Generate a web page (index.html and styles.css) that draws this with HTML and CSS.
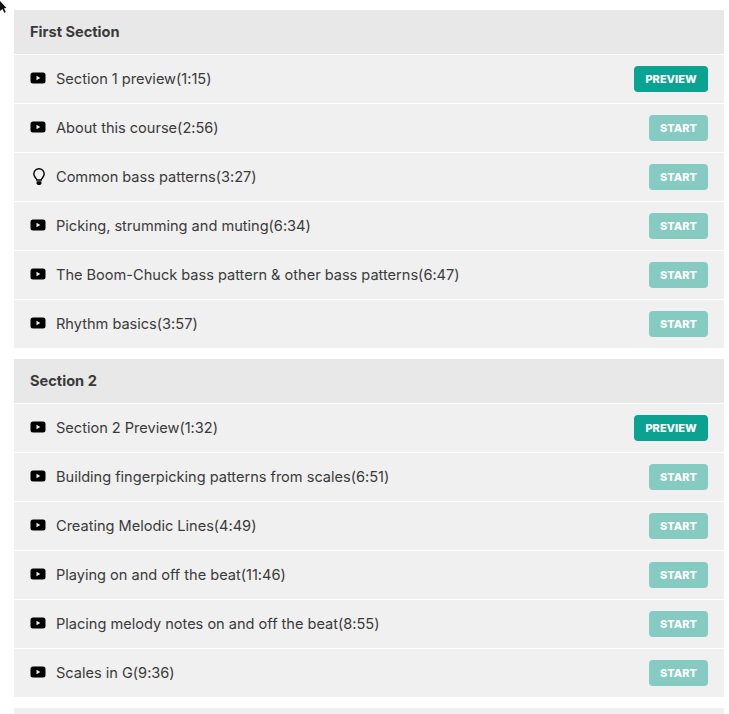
FILE: index.html
```html
<!DOCTYPE html>
<html>
	<head>
		<title>Course curriculum</title>
		<link rel="stylesheet" href="styles.css">
	</head>
	<body>
		<svg class="cursor" width="8" height="15" viewBox="0 0 8 15"><path d="M0 1l6.500 7-2.500.2 1.800 3.800-1.500.8-1.800-3.800L0 11z" fill="#111"/></svg>

		<svg class="defs" width="0" height="0">
			<symbol id="video" viewBox="0 0 16 12"><path fill-rule="evenodd" d="M3 .5h10A2.500 2.500 0 0 1 15.500 3v6A2.500 2.500 0 0 1 13 11.500H3A2.500 2.500 0 0 1 .5 9V3A2.500 2.500 0 0 1 3 .5zM6.500 3.800v4.400L10.300 6z"/></symbol>
			<symbol id="bulb" viewBox="0 0 16 18"><path fill="none" stroke="currentColor" stroke-width="1.400" d="M6.800 12C6.500 9.900 3.800 9 3.800 6A5.200 5.200 0 0 1 14.200 6C14.200 9 11.500 9.900 11.200 12z"/><path d="M6.600 13.300h4.800v2.200l-1.100 1.500H7.700l-1.100-1.500z"/></symbol>
		</svg>

		<section class="section">
			<h2 class="section-title">First Section</h2>
			<ul class="lessons">
				<li class="lesson"><svg class="icon"><use href="#video"/></svg><span class="name">Section 1 preview(1:15)</span><a class="btn preview">PREVIEW</a></li>
				<li class="lesson"><svg class="icon"><use href="#video"/></svg><span class="name">About this course(2:56)</span><a class="btn start">START</a></li>
				<li class="lesson"><svg class="icon icon-bulb"><use href="#bulb"/></svg><span class="name">Common bass patterns(3:27)</span><a class="btn start">START</a></li>
				<li class="lesson"><svg class="icon"><use href="#video"/></svg><span class="name">Picking, strumming and muting(6:34)</span><a class="btn start">START</a></li>
				<li class="lesson"><svg class="icon"><use href="#video"/></svg><span class="name">The Boom-Chuck bass pattern &amp; other bass patterns(6:47)</span><a class="btn start">START</a></li>
				<li class="lesson"><svg class="icon"><use href="#video"/></svg><span class="name">Rhythm basics(3:57)</span><a class="btn start">START</a></li>
			</ul>
		</section>

		<section class="section">
			<h2 class="section-title">Section 2</h2>
			<ul class="lessons">
				<li class="lesson"><svg class="icon"><use href="#video"/></svg><span class="name">Section 2 Preview(1:32)</span><a class="btn preview">PREVIEW</a></li>
				<li class="lesson"><svg class="icon"><use href="#video"/></svg><span class="name">Building fingerpicking patterns from scales(6:51)</span><a class="btn start">START</a></li>
				<li class="lesson"><svg class="icon"><use href="#video"/></svg><span class="name">Creating Melodic Lines(4:49)</span><a class="btn start">START</a></li>
				<li class="lesson"><svg class="icon"><use href="#video"/></svg><span class="name">Playing on and off the beat(11:46)</span><a class="btn start">START</a></li>
				<li class="lesson"><svg class="icon"><use href="#video"/></svg><span class="name">Placing melody notes on and off the beat(8:55)</span><a class="btn start">START</a></li>
				<li class="lesson"><svg class="icon"><use href="#video"/></svg><span class="name">Scales in G(9:36)</span><a class="btn start">START</a></li>
			</ul>
		</section>

		<section class="section next"></section>
	</body>
</html>
```

FILE: styles.css
```css
html, body {
	height: 714px;
	overflow: hidden;
}

body {
	margin: 0;
	padding: 10px 5px 0 14px;
	background: #fff;
	color: #3a3a3a;
	font-family: Inter, "Liberation Sans", sans-serif;
}

/* the pointer was caught in the screenshot */
.cursor {
	position: absolute;
	top: 0;
	left: 0;
}

.defs {
	position: absolute;
}

.section {
	margin-bottom: 11px;
	background: #f0f0f0;
}

.next {
	height: 6px;
	margin-bottom: 0;
}

.section-title {
	height: 44px;
	margin: 0;
	padding-left: 16px;
	border-bottom: 1px solid #fff;
	background: #e8e8e8;
	font-size: 14.6px;
	font-weight: 700;
	line-height: 45px;
}

.lessons {
	margin: 0;
	padding: 0;
	list-style: none;
}

.lesson {
	display: flex;
	align-items: center;
	height: 48px;
	padding: 0 16px;
	border-bottom: 1px solid #fff;
}

.lesson:last-child {
	border-bottom: 0;
}

.icon {
	flex: none;
	width: 16px;
	height: 12px;
	margin-right: 10px;
	margin-top: -2px;
	color: #000;
}

.icon-bulb {
	height: 18px;
	margin-top: 0;
}

.name {
	flex: 1;
	line-height: 18px;
	letter-spacing: -0.02px;
	font-size: 14.6px;
}

.btn {
	height: 26px;
	border-radius: 4px;
	color: #fff;
	font-size: 11px;
	font-weight: 800;
	line-height: 26px;
	text-align: center;
}

.preview {
	width: 74px;
	background: #0aa391;
}

.start {
	width: 59px;
	background: #85cbc2;
}
```
